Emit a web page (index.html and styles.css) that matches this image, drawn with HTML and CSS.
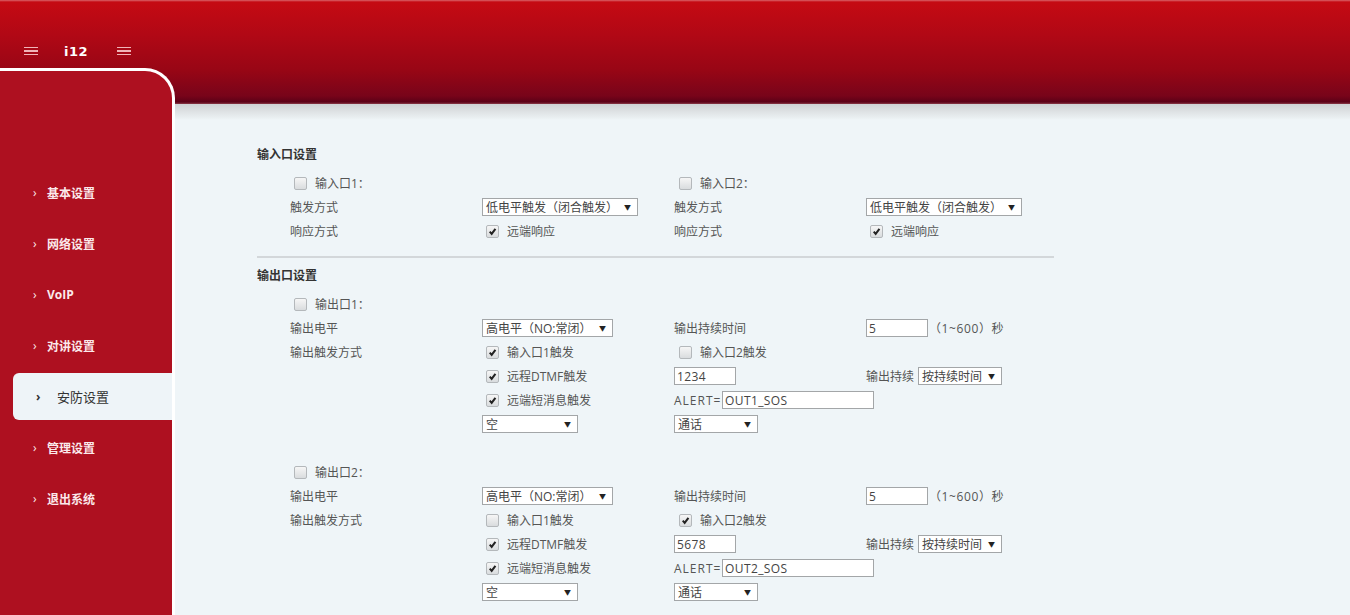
FILE: index.html
```html
<!DOCTYPE html>
<html lang="zh-CN">
<head>
    <meta charset="UTF-8">
    <title>i12 安防设置</title>
    <link rel="stylesheet" href="styles.css">
</head>
<body>
    <div class="header">
        <div class="brand">
            <span class="burger"><i></i><i></i><i></i></span>
            <span class="logo">i12</span>
            <span class="burger"><i></i><i></i><i></i></span>
        </div>
    </div>

    <div class="layout">
        <div class="sidebar">
            <div class="nav-item"><span class="chev">›</span>基本设置</div>
            <div class="nav-item"><span class="chev">›</span>网络设置</div>
            <div class="nav-item"><span class="chev">›</span>VoIP</div>
            <div class="nav-item"><span class="chev">›</span>对讲设置</div>
            <div class="nav-item active"><span class="chev">›</span>安防设置</div>
            <div class="nav-item"><span class="chev">›</span>管理设置</div>
            <div class="nav-item"><span class="chev">›</span>退出系统</div>
        </div>

        <div class="main">
            <!-- 输入口 -->
            <div class="title">输入口设置</div>
            <div class="grid">
                <div class="c in1"><span class="cb"></span>输入口1：</div>
                <div class="c"></div>
                <div class="c in3"><span class="cb"></span>输入口2：</div>
                <div class="c"></div>

                <div class="c">触发方式</div>
                <div class="c"><div class="sel w156"><span>低电平触发（闭合触发）</span><b>▼</b></div></div>
                <div class="c">触发方式</div>
                <div class="c"><div class="sel w156"><span>低电平触发（闭合触发）</span><b>▼</b></div></div>

                <div class="c">响应方式</div>
                <div class="c in2"><span class="cb on"><svg viewBox="0 0 12 12"><path d="M3 6.2 L5.1 8.6 L9.2 3.2"/></svg></span>远端响应</div>
                <div class="c">响应方式</div>
                <div class="c in2"><span class="cb on"><svg viewBox="0 0 12 12"><path d="M3 6.2 L5.1 8.6 L9.2 3.2"/></svg></span>远端响应</div>
            </div>

            <div class="sep"></div>

            <!-- 输出口 -->
            <div class="title">输出口设置</div>
            <div class="grid">
                <div class="c in1"><span class="cb"></span>输出口1：</div>
                <div class="c"></div><div class="c"></div><div class="c"></div>

                <div class="c">输出电平</div>
                <div class="c"><div class="sel w131"><span>高电平（NO:常闭）</span><b>▼</b></div></div>
                <div class="c">输出持续时间</div>
                <div class="c"><input class="txt w62" type="text" value="5"><span class="unit">（1~600）秒</span></div>

                <div class="c">输出触发方式</div>
                <div class="c in2"><span class="cb on"><svg viewBox="0 0 12 12"><path d="M3 6.2 L5.1 8.6 L9.2 3.2"/></svg></span>输入口1触发</div>
                <div class="c in3"><span class="cb"></span>输入口2触发</div>
                <div class="c"></div>

                <div class="c"></div>
                <div class="c in2"><span class="cb on"><svg viewBox="0 0 12 12"><path d="M3 6.2 L5.1 8.6 L9.2 3.2"/></svg></span>远程DTMF触发</div>
                <div class="c"><input class="txt w62" type="text" value="1234"></div>
                <div class="c">输出持续<div class="sel w84 ml"><span>按持续时间</span><b>▼</b></div></div>

                <div class="c"></div>
                <div class="c in2"><span class="cb on"><svg viewBox="0 0 12 12"><path d="M3 6.2 L5.1 8.6 L9.2 3.2"/></svg></span>远端短消息触发</div>
                <div class="c"><span class="alert">ALERT=</span><input class="txt w152" type="text" value="OUT1_SOS"></div>
                <div class="c"></div>

                <div class="c"></div>
                <div class="c"><div class="sel w96"><span>空</span><b>▼</b></div></div>
                <div class="c"><div class="sel w84"><span>通话</span><b>▼</b></div></div>
                <div class="c"></div>

                <div class="c gap"></div>

                <div class="c in1"><span class="cb"></span>输出口2：</div>
                <div class="c"></div><div class="c"></div><div class="c"></div>

                <div class="c">输出电平</div>
                <div class="c"><div class="sel w131"><span>高电平（NO:常闭）</span><b>▼</b></div></div>
                <div class="c">输出持续时间</div>
                <div class="c"><input class="txt w62" type="text" value="5"><span class="unit">（1~600）秒</span></div>

                <div class="c">输出触发方式</div>
                <div class="c in2"><span class="cb"></span>输入口1触发</div>
                <div class="c in3"><span class="cb on"><svg viewBox="0 0 12 12"><path d="M3 6.2 L5.1 8.6 L9.2 3.2"/></svg></span>输入口2触发</div>
                <div class="c"></div>

                <div class="c"></div>
                <div class="c in2"><span class="cb on"><svg viewBox="0 0 12 12"><path d="M3 6.2 L5.1 8.6 L9.2 3.2"/></svg></span>远程DTMF触发</div>
                <div class="c"><input class="txt w62" type="text" value="5678"></div>
                <div class="c">输出持续<div class="sel w84 ml"><span>按持续时间</span><b>▼</b></div></div>

                <div class="c"></div>
                <div class="c in2"><span class="cb on"><svg viewBox="0 0 12 12"><path d="M3 6.2 L5.1 8.6 L9.2 3.2"/></svg></span>远端短消息触发</div>
                <div class="c"><span class="alert">ALERT=</span><input class="txt w152" type="text" value="OUT2_SOS"></div>
                <div class="c"></div>

                <div class="c"></div>
                <div class="c"><div class="sel w96"><span>空</span><b>▼</b></div></div>
                <div class="c"><div class="sel w84"><span>通话</span><b>▼</b></div></div>
                <div class="c"></div>
            </div>
        </div>
    </div>
</body>
</html>
```

FILE: styles.css
```css
html, body {
    margin: 0;
    height: 100%;
    overflow: hidden;
}
body {
    font-family: "Open Sans", "Noto Sans CJK SC", sans-serif;
    font-size: 12px;
    color: #555;
    background: #eff5f8;
}

/* header */
.header {
    height: 104px;
    background: linear-gradient(to bottom, #d9646a 0, #c50a13 2px, #b10815 35px, #980615 70px, #78041a 96px, #5c0117 102px, #8a3a48 104px);
}
.brand {
    display: flex;
    align-items: center;
    height: 102px;
    padding-left: 24px;
}
.burger {
    display: flex;
    flex-direction: column;
    gap: 2px;
    width: 14px;
}
.burger i {
    display: block;
    height: 1.5px;
    background: #f1b4b8;
}
.logo {
    color: #fff;
    font-family: "DejaVu Sans", sans-serif;
    font-weight: bold;
    font-size: 13px;
    margin: 0 29px 0 26px;
    letter-spacing: 0.5px;
}

/* layout */
.layout {
    display: flex;
    height: calc(100% - 104px);
}
.sidebar {
    width: 172px;
    flex: none;
    margin-top: -36px;
    position: relative;
    z-index: 1;
    background: #ae1020;
    border-top: 3px solid #fff;
    border-right: 3px solid #fff;
    border-top-right-radius: 30px;
    padding-top: 98px;
    box-sizing: content-box;
}
.nav-item {
    display: flex;
    align-items: center;
    height: 47px;
    margin-bottom: 4px;
    padding-left: 33px;
    color: #fbe9eb;
    font-weight: bold;
    font-size: 12px;
}
.nav-item .chev {
    width: 14px;
    font-size: 12px;
    font-weight: normal;
}
.nav-item.active {
    margin-left: 13px;
    padding-left: 23px;
    background: #eef4f8;
    border-radius: 6px 0 0 6px;
    color: #333;
    font-weight: normal;
    font-size: 13px;
}
.nav-item.active .chev {
    width: 21px;
    font-weight: bold;
}

.main {
    flex: 1;
    padding: 41px 0 0 82px;
    background: linear-gradient(to bottom, #cfd2d4 0, #dfe3e5 8px, #eaf0f2 14px, #eff5f8 16px);
}
.title {
    height: 20px;
    line-height: 20px;
    font-weight: bold;
    color: #333;
    margin-bottom: 6px;
}
.grid {
    display: grid;
    grid-template-columns: 192px 192px 192px 300px;
    grid-auto-rows: 24px;
    margin-left: 33px;
}
.c {
    display: flex;
    align-items: center;
    white-space: nowrap;
}
.c > * {
    flex: none;
}
.c.gap {
    grid-column: 1 / -1;
    height: 25px;
}
.in1 { padding-left: 4px; }
.in2 { padding-left: 4px; }
.in3 { padding-left: 5px; }

.sep {
    width: 797px;
    height: 2px;
    background: #d3d7da;
    margin: 13px 0 8px;
}

/* checkbox */
.cb {
    width: 11px;
    height: 11px;
    border: 1px solid #b4b8bb;
    border-radius: 2px;
    background: linear-gradient(#f6f6f6, #d9dcde);
    margin-right: 8px;
    display: inline-flex;
}
.cb svg {
    width: 11px;
    height: 11px;
}
.cb svg path {
    fill: none;
    stroke: #222;
    stroke-width: 2.2;
}

/* select */
.sel {
    display: flex;
    align-items: center;
    justify-content: space-between;
    height: 16px;
    border: 1px solid #a3a6a8;
    background: #fff;
    padding: 0 6px 0 3px;
    color: #444;
    box-sizing: content-box;
}
.sel b {
    font-size: 7px;
    font-weight: normal;
    color: #222;
}
.w156 { width: 145px; }
.w131 { width: 120px; }
.w96 { width: 85px; }
.w84 { width: 73px; }
.ml { margin-left: 4px; }

.txt {
    height: 18px;
    box-sizing: border-box;
    border: 1px solid #a3a6a8;
    background: #fff;
    font: inherit;
    color: #444;
    padding: 0 2px;
    margin: 0;
    letter-spacing: 0.4px;
}
.w62 { width: 62px; }
.w152 { width: 152px; }
.alert {
    width: 48px;
    letter-spacing: 1px;
}
.unit {
    margin-left: 1px;
    letter-spacing: 0.6px;
}
```
